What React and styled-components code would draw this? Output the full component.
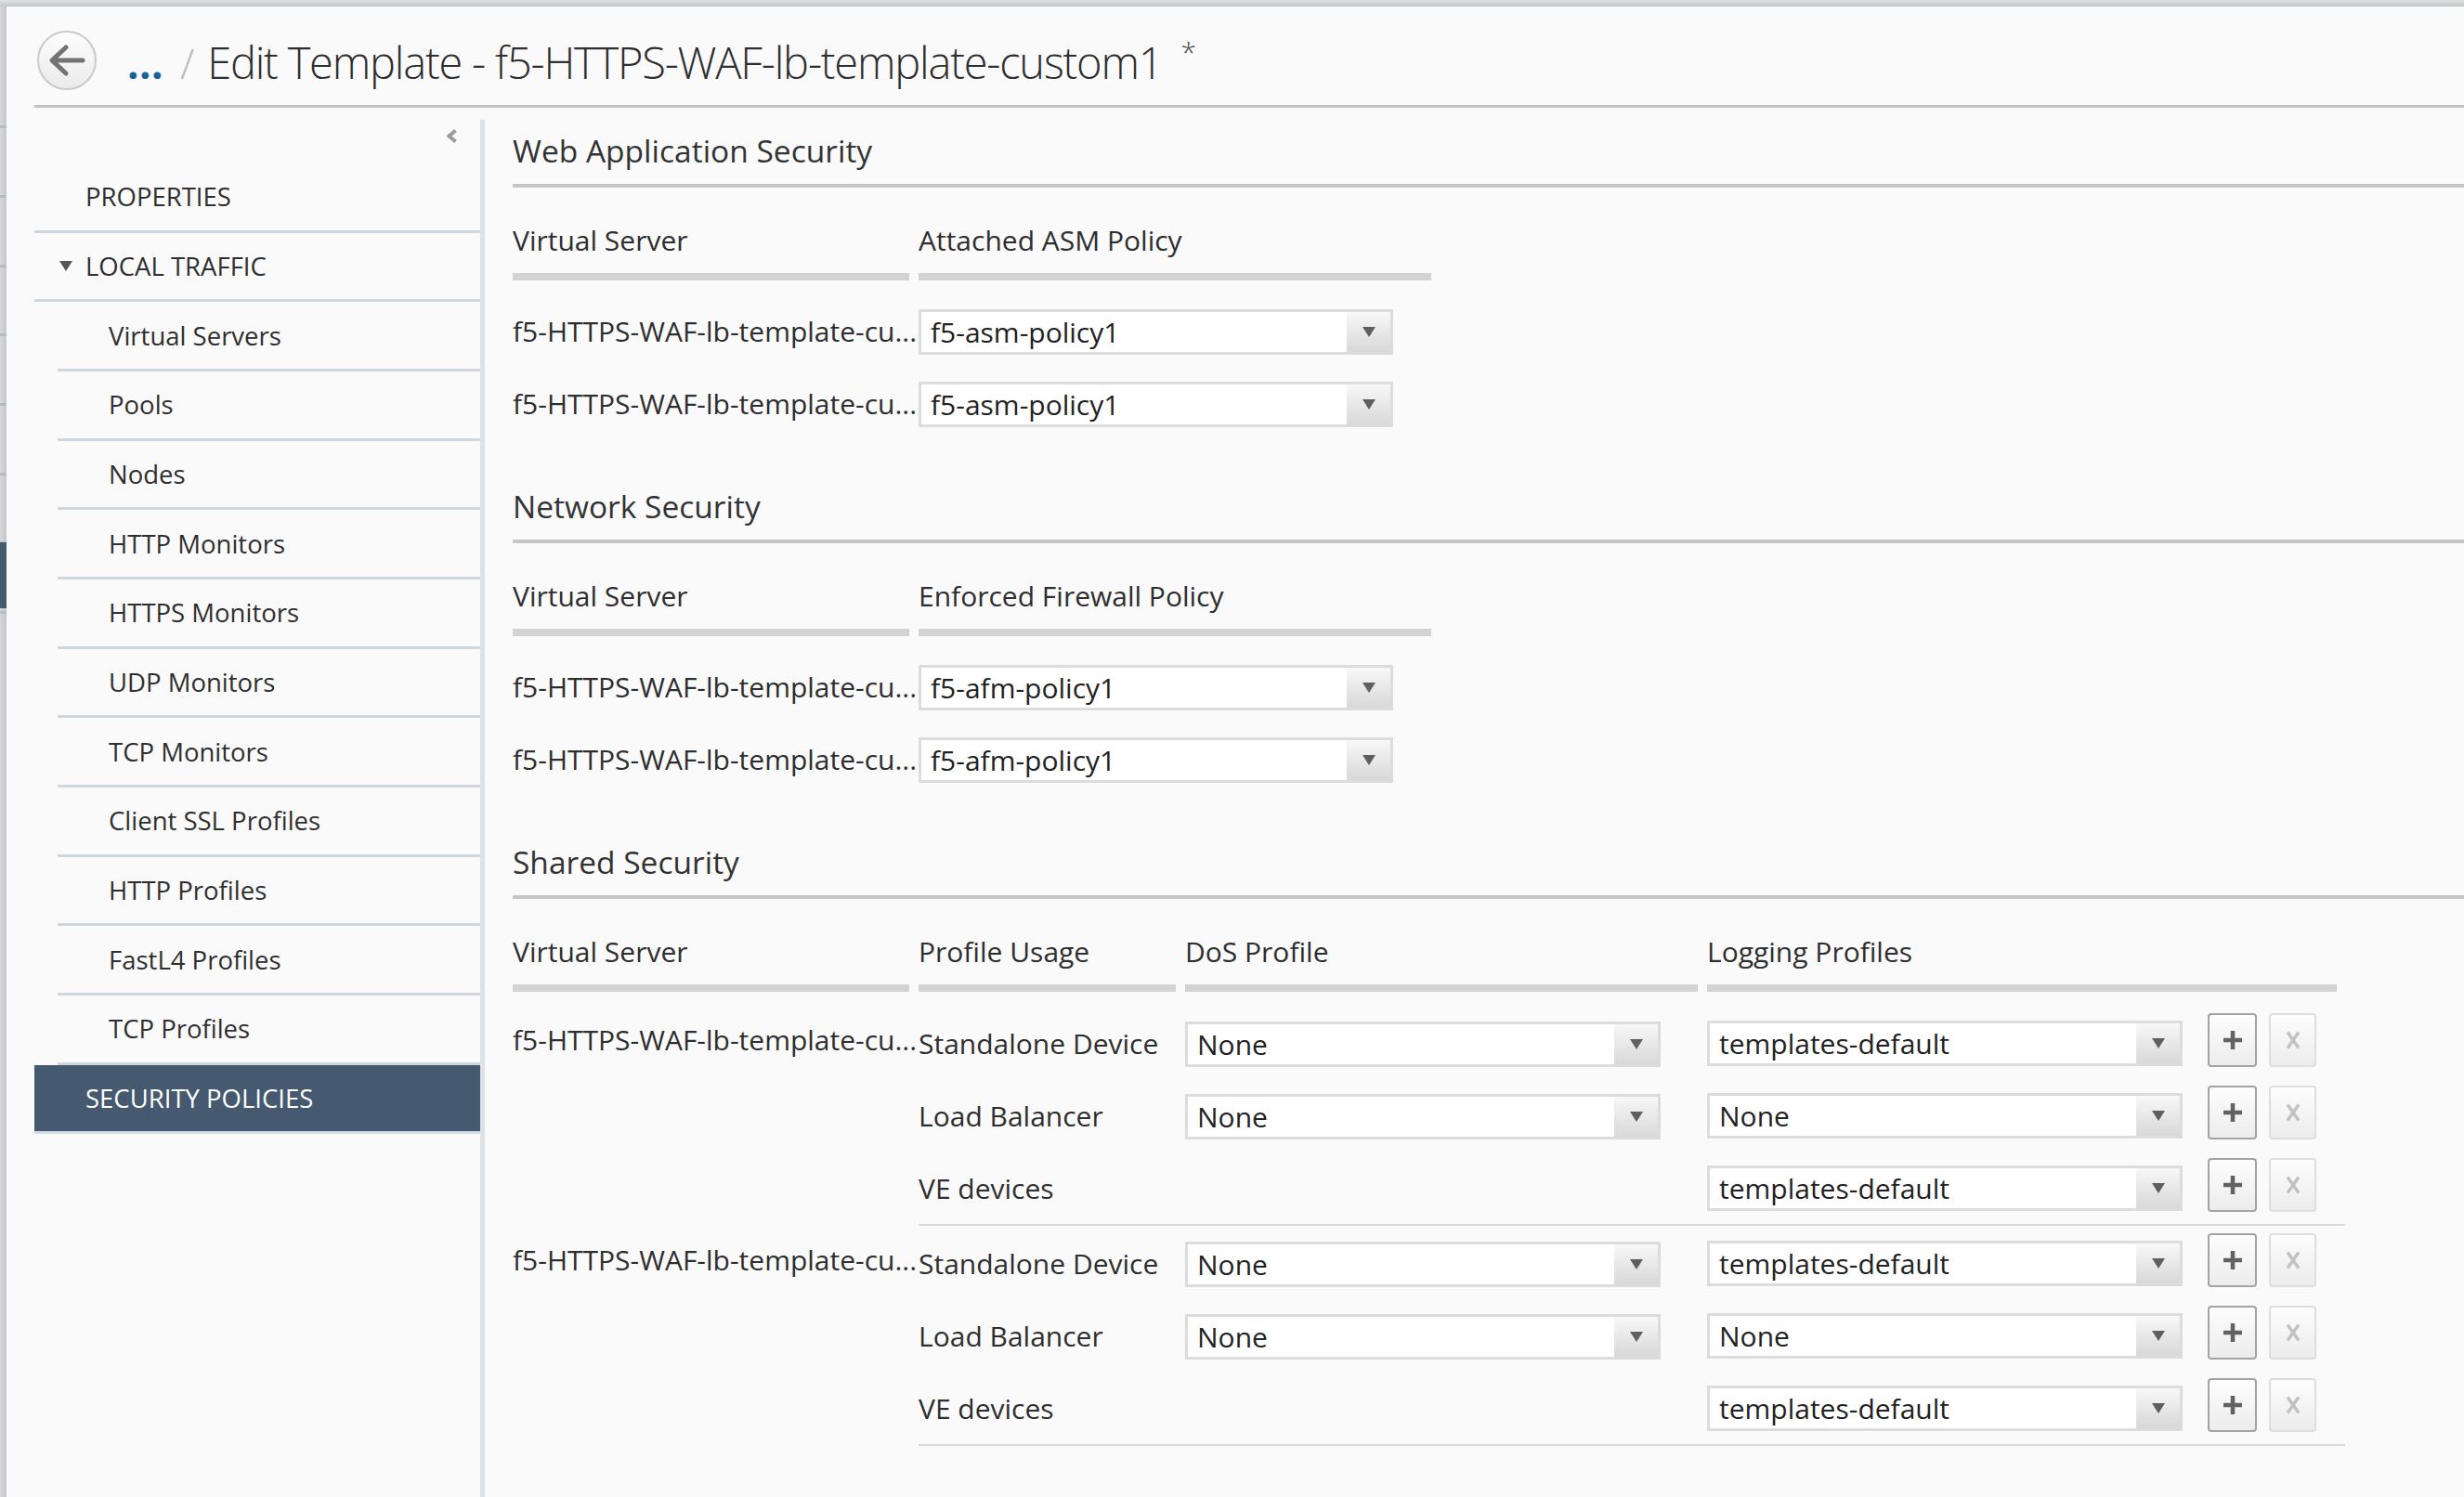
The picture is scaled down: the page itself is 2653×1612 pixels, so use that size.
import React from 'react';
import styled, { createGlobalStyle } from 'styled-components';

const Global = createGlobalStyle`
  html, body { margin: 0; padding: 0; background: #fafafa; }
  body { font-family: "Open Sans", "Noto Sans", sans-serif; color: #333; }
  * { box-sizing: border-box; }
`;

const Page = styled.div`
  width: 2653px;
  height: 1612px;
  overflow: hidden;
  display: grid;
  grid-template-columns: 7px 1fr;
  grid-template-rows: 7px 1fr;
  background: #fafafa;
`;

const TopStrip = styled.div`
  grid-column: 1 / -1;
  background: linear-gradient(to bottom, #e0e2e3, #c2c4c5);
`;

const LeftStrip = styled.div`
  background:
    linear-gradient(to bottom, #465a6e, #465a6e),
    repeating-linear-gradient(to bottom, transparent 0 53.3px, #b6bbbf 53.3px 56.3px, transparent 56.3px 74.67px),
    linear-gradient(to right, #d6d9dc, #c3c7ca);
  background-repeat: no-repeat;
  background-size: 7px 71px, 7px 590px, 100% 100%;
  background-position: 0 577px, 0 74.67px, 0 0;
`;

const Panel = styled.div`
  padding-left: 30px;
  display: flex;
  flex-direction: column;
  min-width: 0;
`;

const Header = styled.header`
  height: 109px;
  padding-top: 10px;
  display: flex;
  align-items: center;
  border-bottom: 3px solid #c2c2c2;
`;

const BackButton = styled.button`
  width: 64px;
  height: 64px;
  margin-left: 3px;
  padding: 0;
  border-radius: 50%;
  border: 2px solid #cacaca;
  background: linear-gradient(to bottom, #fdfdfd, #ebebeb);
  display: grid;
  place-items: center;
`;

const Crumbs = styled.div`
  display: flex;
  align-items: baseline;
  margin-left: 33px;
  margin-top: 4px;
`;

const Dots = styled.span`
  font-size: 44px;
  font-weight: 700;
  color: #15639d;
  letter-spacing: 0.5px;
`;

const Slash = styled.span`
  margin-left: 18px;
  font-size: 44px;
  font-weight: 300;
  color: #b8b8b8;
`;

const Title = styled.h1`
  margin: 0 0 0 14px;
  font-size: 47px;
  font-weight: 300;
  letter-spacing: -1.2px;
  color: #2e2e2e;
  white-space: nowrap;
`;

const Star = styled.span`
  align-self: flex-start;
  margin-left: 20px;
  margin-top: 0;
  font-size: 30px;
  font-weight: 300;
  color: #444;
`;

const Body = styled.div`
  flex: 1;
  display: flex;
  min-height: 0;
`;

const Sidebar = styled.nav`
  width: 480px;
  flex: none;
`;

const CollapseRow = styled.div`
  height: 60px;
  display: flex;
  justify-content: flex-end;
  padding: 22px 24px 0 0;
`;

const NavItem = styled.div`
  height: 74.67px;
  margin-left: ${p => (p.$sub ? 25 : 0)}px;
  padding-left: ${p => p.$pad || 55}px;
  display: flex;
  align-items: center;
  gap: 14px;
  font-size: 27.5px;
  color: ${p => (p.$active ? '#ffffff' : '#2f2f2f')};
  background: ${p => (p.$active ? '#455a70' : 'transparent')};
  border-bottom: 3px solid ${p => (p.$active ? '#d3dae1' : '#cfd6dd')};
  white-space: nowrap;
`;

const Main = styled.main`
  flex: 1;
  margin-top: 13px;
  border-left: 5px solid #dde2e6;
  padding: 11px 0 0 30px;
  min-width: 0;
`;

const Section = styled.section`
  & + & {
    margin-top: 63px;
  }
`;

const SectionTitle = styled.h2`
  margin: 0;
  font-size: 33.5px;
  font-weight: 400;
  line-height: 44px;
  padding-bottom: 14px;
  border-bottom: 4px solid #c6c6c6;
  color: #333;
`;

const ColHeaders = styled.div`
  display: grid;
  grid-template-columns: ${p => p.$cols};
  column-gap: 10px;
  margin-top: 37px;
`;

const ColHead = styled.div`
  font-size: 30px;
  font-weight: 400;
  line-height: 40px;
  padding-bottom: 15px;
  border-bottom: 8px solid #d3d3d3;
  color: #2e2e2e;
  white-space: nowrap;
`;

const Rows = styled.div`
  display: flex;
  flex-direction: column;
  gap: 29px;
  padding-top: 31px;
`;

const Row = styled.div`
  display: grid;
  grid-template-columns: ${p => p.$cols};
  column-gap: 10px;
  align-items: center;
  height: 49px;
`;

const CellText = styled.div`
  font-size: 30px;
  font-weight: 400;
  color: #2e2e2e;
  white-space: nowrap;
  line-height: 49px;
  margin-top: ${p => p.$lift || 0}px;
`;

const SelectBox = styled.div`
  width: ${p => p.$w}px;
  height: 49px;
  border: 3px solid #dcdcdc;
  background: #fff;
  display: flex;
  align-items: center;
`;

const SelectValue = styled.span`
  flex: 1;
  padding-left: 10px;
  font-size: 30px;
  font-weight: 400;
  color: #222;
  white-space: nowrap;
`;

const SelectArrow = styled.span`
  width: 47px;
  align-self: stretch;
  background: linear-gradient(to bottom, #f8f8f8, #d8d8d8);
  display: grid;
  place-items: center;
`;

const Groups = styled.div`
  padding-top: 15px;
`;

const Group = styled.div`
  display: grid;
  grid-template-columns: 427px 1536px;
  column-gap: 10px;
`;

const GroupName = styled.div`
  padding-top: 16px;
`;

const SubRows = styled.div`
  display: flex;
  flex-direction: column;
  gap: 29px;
  padding: 16px 0 14px;
  border-bottom: 2px solid #dadada;
`;

const LogCell = styled.div`
  display: flex;
  align-items: flex-start;
`;

const IconButton = styled.button`
  width: ${p => p.$w}px;
  height: 58px;
  margin-top: -8px;
  margin-left: ${p => p.$ml}px;
  padding: 0;
  border-radius: 4px;
  border: 2px solid ${p => (p.$muted ? '#dedede' : '#a3a3a3')};
  background: linear-gradient(to bottom, #fdfdfd, #ececec);
  display: grid;
  place-items: center;
`;

const Arrow = () => (
  <svg width="14" height="11" viewBox="0 0 14 11">
    <polygon points="0,0 14,0 7,11" fill="#5f5f5f" />
  </svg>
);

const Select = ({ value, w = 512 }) => (
  <SelectBox $w={w}>
    <SelectValue>{value}</SelectValue>
    <SelectArrow>
      <Arrow />
    </SelectArrow>
  </SelectBox>
);

const PlusIcon = () => (
  <svg width="22" height="22" viewBox="0 0 22 22">
    <path d="M11 1 V21 M1 11 H21" stroke="#626262" strokeWidth="4.5" />
  </svg>
);

const XIcon = () => (
  <svg width="16" height="20" viewBox="0 0 16 20">
    <path d="M2 1.5 L14 18.5 M14 1.5 L2 18.5" stroke="#c2c2c2" strokeWidth="3.5" />
  </svg>
);

const VS = 'f5-HTTPS-WAF-lb-template-cu...';

const navItems = [
  { label: 'PROPERTIES' },
  { label: 'LOCAL TRAFFIC', caret: true },
  { label: 'Virtual Servers', sub: true },
  { label: 'Pools', sub: true },
  { label: 'Nodes', sub: true },
  { label: 'HTTP Monitors', sub: true },
  { label: 'HTTPS Monitors', sub: true },
  { label: 'UDP Monitors', sub: true },
  { label: 'TCP Monitors', sub: true },
  { label: 'Client SSL Profiles', sub: true },
  { label: 'HTTP Profiles', sub: true },
  { label: 'FastL4 Profiles', sub: true },
  { label: 'TCP Profiles', sub: true },
  { label: 'SECURITY POLICIES', active: true },
];

const twoCols = '427px 552px';
const shared = [
  { usage: 'Standalone Device', dos: 'None', log: 'templates-default' },
  { usage: 'Load Balancer', dos: 'None', log: 'None' },
  { usage: 'VE devices', dos: null, log: 'templates-default' },
];

const PolicyTable = ({ title, column, policy }) => (
  <Section>
    <SectionTitle>{title}</SectionTitle>
    <ColHeaders $cols={twoCols}>
      <ColHead>Virtual Server</ColHead>
      <ColHead>{column}</ColHead>
    </ColHeaders>
    <Rows>
      {[0, 1].map(i => (
        <Row key={i} $cols={twoCols}>
          <CellText $lift={-2}>{VS}</CellText>
          <Select value={policy} w={511} />
        </Row>
      ))}
    </Rows>
  </Section>
);

export default function App() {
  return (
    <>
      <Global />
      <Page>
        <TopStrip />
        <LeftStrip />
        <Panel>
          <Header>
            <BackButton aria-label="Back">
              <svg width="40" height="36" viewBox="0 0 40 36">
                <path d="M4 18 H37 M19 4 L4 18 L19 32" fill="none" stroke="#737373" strokeWidth="5" strokeLinecap="round" strokeLinejoin="round" />
              </svg>
            </BackButton>
            <Crumbs>
              <Dots>...</Dots>
              <Slash>/</Slash>
              <Title>Edit Template - f5-HTTPS-WAF-lb-template-custom1</Title>
              <Star>*</Star>
            </Crumbs>
          </Header>
          <Body>
            <Sidebar>
              <CollapseRow>
                <svg width="13" height="17" viewBox="0 0 13 17">
                  <path d="M10.5 2.5 L3.5 8.5 L10.5 14.5" fill="none" stroke="#9c9c9c" strokeWidth="4" />
                </svg>
              </CollapseRow>
              {navItems.map(item => (
                <NavItem key={item.label} $sub={item.sub} $active={item.active} $pad={item.caret ? 27 : 55}>
                  {item.caret && (
                    <svg width="14" height="11" viewBox="0 0 14 11">
                      <polygon points="0,0 14,0 7,11" fill="#555" />
                    </svg>
                  )}
                  {item.label}
                </NavItem>
              ))}
            </Sidebar>
            <Main>
              <PolicyTable title="Web Application Security" column="Attached ASM Policy" policy="f5-asm-policy1" />
              <PolicyTable title="Network Security" column="Enforced Firewall Policy" policy="f5-afm-policy1" />
              <Section>
                <SectionTitle>Shared Security</SectionTitle>
                <ColHeaders $cols="427px 277px 552px 678px">
                  <ColHead>Virtual Server</ColHead>
                  <ColHead>Profile Usage</ColHead>
                  <ColHead>DoS Profile</ColHead>
                  <ColHead>Logging Profiles</ColHead>
                </ColHeaders>
                <Groups>
                  {[0, 1].map(g => (
                    <Group key={g}>
                      <GroupName>
                        <CellText $lift={-4}>{VS}</CellText>
                      </GroupName>
                      <SubRows>
                        {shared.map(r => (
                          <Row key={r.usage} $cols="277px 552px 678px">
                            <CellText $lift={-2}>{r.usage}</CellText>
                            <div>{r.dos && <Select value={r.dos} />}</div>
                            <LogCell>
                              <Select value={r.log} />
                              <IconButton $w={53} $ml={27} aria-label="Add">
                                <PlusIcon />
                              </IconButton>
                              <IconButton $w={51} $ml={13} $muted aria-label="Remove">
                                <XIcon />
                              </IconButton>
                            </LogCell>
                          </Row>
                        ))}
                      </SubRows>
                    </Group>
                  ))}
                </Groups>
              </Section>
            </Main>
          </Body>
        </Panel>
      </Page>
    </>
  );
}
